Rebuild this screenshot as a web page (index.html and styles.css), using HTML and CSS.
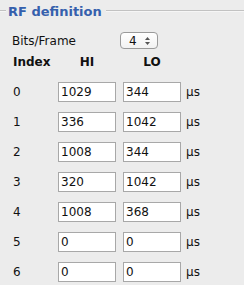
FILE: index.html
```html
<!DOCTYPE html>
<html lang="en">
<head>
    <meta charset="UTF-8">
    <title>RF definition</title>
    <link rel="stylesheet" href="styles.css">
</head>
<body>
    <div class="panel">
        <div class="legend">
            <span class="legend-line short"></span>
            <span class="legend-title">RF definition</span>
            <span class="legend-line"></span>
        </div>

        <div class="bits-row">
            <label for="bits">Bits/Frame</label>
            <div class="stepper" id="bits">
                <span>4</span>
                <svg width="7" height="10" viewBox="0 0 7 10">
                    <path d="M3.5 1 L6 4 L1 4 Z" fill="#555"/>
                    <path d="M3.5 9 L6 6 L1 6 Z" fill="#555"/>
                </svg>
            </div>
        </div>

        <div class="timing-grid">
            <div class="head">Index</div>
            <div class="head center">HI</div>
            <div class="head center">LO</div>
            <div></div>

            <div class="idx">0</div>
            <input class="val" type="text" value="1029">
            <input class="val" type="text" value="344">
            <div class="unit">µs</div>

            <div class="idx">1</div>
            <input class="val" type="text" value="336">
            <input class="val" type="text" value="1042">
            <div class="unit">µs</div>

            <div class="idx">2</div>
            <input class="val" type="text" value="1008">
            <input class="val" type="text" value="344">
            <div class="unit">µs</div>

            <div class="idx">3</div>
            <input class="val" type="text" value="320">
            <input class="val" type="text" value="1042">
            <div class="unit">µs</div>

            <div class="idx">4</div>
            <input class="val" type="text" value="1008">
            <input class="val" type="text" value="368">
            <div class="unit">µs</div>

            <div class="idx">5</div>
            <input class="val" type="text" value="0">
            <input class="val" type="text" value="0">
            <div class="unit">µs</div>

            <div class="idx">6</div>
            <input class="val" type="text" value="0">
            <input class="val" type="text" value="0">
            <div class="unit">µs</div>
        </div>
    </div>
</body>
</html>
```

FILE: styles.css
```css
* {
    margin: 0;
    padding: 0;
    box-sizing: border-box;
    font-family: 'DejaVu Sans', sans-serif;
}

body {
    background: #ececec;
    color: #111;
    font-size: 12px;
}

.panel {
    width: 244px;
    height: 285px;
    overflow: hidden;
}

.legend {
    display: flex;
    align-items: center;
    height: 22px;
}

.legend-line {
    flex: 1;
    height: 2px;
    border-top: 1px solid #c2c2c2;
    border-bottom: 1px solid #f6f6f6;
}

.legend-line.short {
    flex: 0 0 6px;
}

.legend-title {
    color: #3560ad;
    font-weight: bold;
    font-size: 13px;
    padding: 0 4px 0 2px;
}

.bits-row {
    display: flex;
    align-items: center;
    padding-left: 12px;
    margin-top: 10px;
    height: 17px;
}

.bits-row label {
    width: 108px;
}

.stepper {
    width: 38px;
    height: 17px;
    border: 1px solid #9a9a9a;
    border-radius: 4px;
    background: linear-gradient(#ffffff, #f2f2f2);
    display: flex;
    align-items: center;
    justify-content: space-between;
    padding: 0 6px 0 8px;
    font-size: 12px;
}

.timing-grid {
    display: grid;
    grid-template-columns: 38px 58px 58px auto;
    grid-auto-rows: 20px;
    column-gap: 7px;
    row-gap: 10px;
    padding-left: 13px;
    margin-top: 3px;
    align-items: center;
}

.head {
    font-weight: bold;
}

.center {
    text-align: center;
}

.val {
    width: 58px;
    height: 20px;
    border: 1px solid #a8a8a8;
    background: #fff;
    padding: 0 2px;
    font-size: 12px;
    color: #111;
    outline: none;
}

.unit {
    margin-left: -2px;
}
```
